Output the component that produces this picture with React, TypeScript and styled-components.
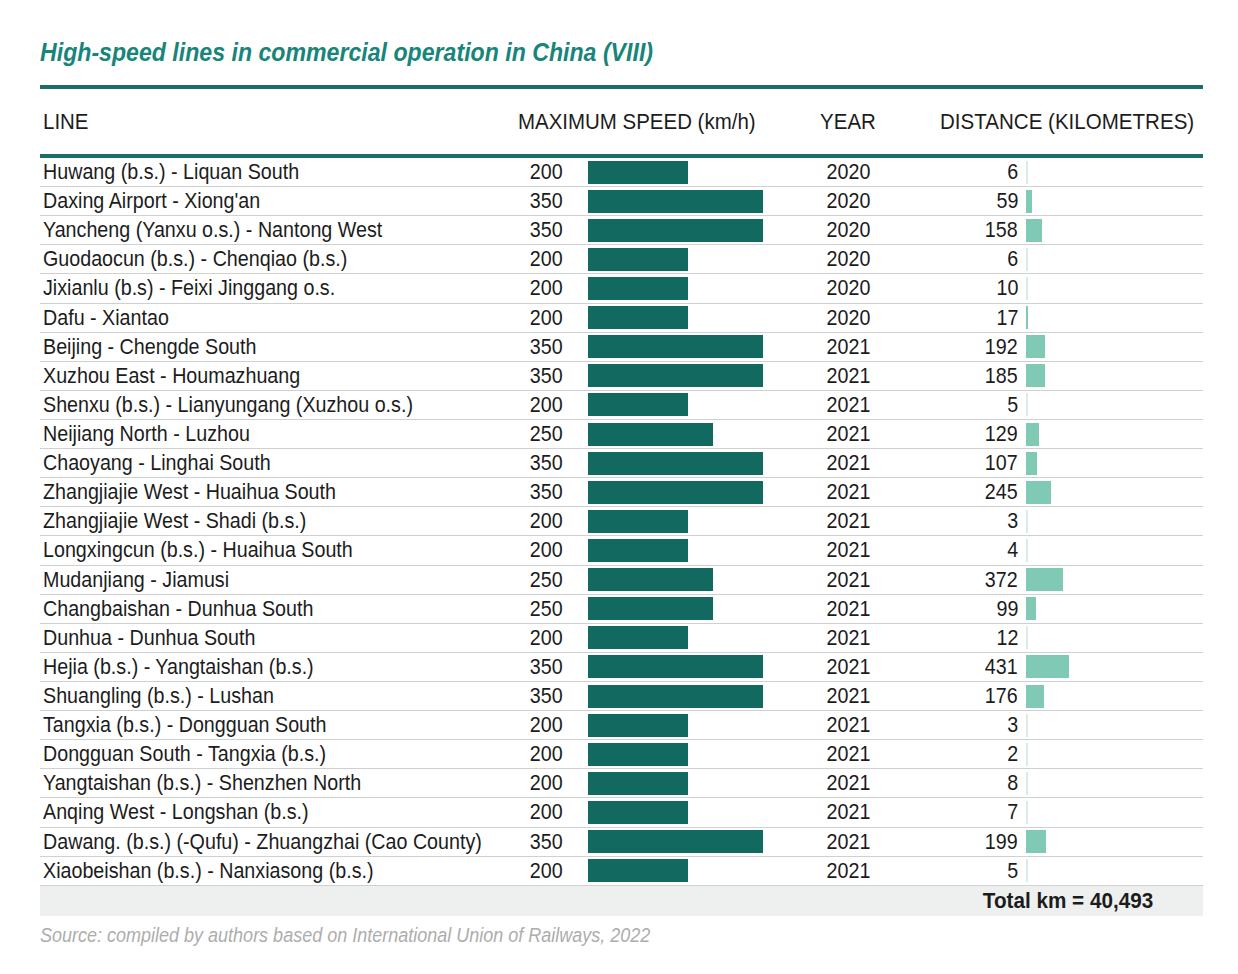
import React from "react";
import styled, { createGlobalStyle } from "styled-components";

const GlobalStyle = createGlobalStyle`
  html, body { margin: 0; padding: 0; background: #ffffff; }
  body { font-family: "Liberation Sans Narrow", "Arial Narrow", "Liberation Sans", Arial, sans-serif; color: #1c1c1c; }
`;

const rows: [string, number, number, number][] = [
  ["Huwang (b.s.) - Liquan South", 200, 2020, 6],
  ["Daxing Airport - Xiong'an", 350, 2020, 59],
  ["Yancheng (Yanxu o.s.) - Nantong West", 350, 2020, 158],
  ["Guodaocun (b.s.) - Chenqiao (b.s.)", 200, 2020, 6],
  ["Jixianlu (b.s) - Feixi Jinggang o.s.", 200, 2020, 10],
  ["Dafu - Xiantao", 200, 2020, 17],
  ["Beijing - Chengde South", 350, 2021, 192],
  ["Xuzhou East - Houmazhuang", 350, 2021, 185],
  ["Shenxu (b.s.) - Lianyungang (Xuzhou o.s.)", 200, 2021, 5],
  ["Neijiang North - Luzhou", 250, 2021, 129],
  ["Chaoyang - Linghai South", 350, 2021, 107],
  ["Zhangjiajie West - Huaihua South", 350, 2021, 245],
  ["Zhangjiajie West - Shadi (b.s.)", 200, 2021, 3],
  ["Longxingcun (b.s.) - Huaihua South", 200, 2021, 4],
  ["Mudanjiang - Jiamusi", 250, 2021, 372],
  ["Changbaishan - Dunhua South", 250, 2021, 99],
  ["Dunhua - Dunhua South", 200, 2021, 12],
  ["Hejia (b.s.) - Yangtaishan (b.s.)", 350, 2021, 431],
  ["Shuangling (b.s.) - Lushan", 350, 2021, 176],
  ["Tangxia (b.s.) - Dongguan South", 200, 2021, 3],
  ["Dongguan South - Tangxia (b.s.)", 200, 2021, 2],
  ["Yangtaishan (b.s.) - Shenzhen North", 200, 2021, 8],
  ["Anqing West - Longshan (b.s.)", 200, 2021, 7],
  ["Dawang. (b.s.) (-Qufu) - Zhuangzhai (Cao County)", 350, 2021, 199],
  ["Xiaobeishan (b.s.) - Nanxiasong (b.s.)", 200, 2021, 5],
];

const Page = styled.div`
  padding: 34px 35px 20px 40px;
  width: 1163px;
`;

/* Condensed text: Liberation Sans squeezed horizontally to mimic Arial Narrow */
const Narrow = styled.span<{ $scale: number; $origin?: string }>`
  display: inline-block;
  white-space: nowrap;
  transform: scaleX(${(p) => p.$scale});
  transform-origin: ${(p) => p.$origin ?? "left"} center;
`;

const Title = styled.h1`
  margin: 0 0 15px 0;
  font-size: 25.5px;
  font-weight: bold;
  font-style: italic;
  color: #17857a;
  line-height: 36px;
`;

const Table = styled.div`
  border-top: 4px solid #1c6f68;
`;

const Grid = styled.div`
  display: grid;
  grid-template-columns: 480px 44px 224px 120px 111px 184px;
  align-items: center;
`;

const HeaderRow = styled(Grid)`
  height: 65px;
  border-bottom: 4px solid #1c6f68;
  font-size: 22px;
`;

const HeadCell = styled.div<{ $align?: string; $span?: number; $pad?: string }>`
  grid-column: span ${(p) => p.$span ?? 1};
  text-align: ${(p) => p.$align ?? "left"};
  padding: ${(p) => p.$pad ?? "0"};
  white-space: nowrap;
`;

const Row = styled(Grid)`
  height: 29.12px;
  box-sizing: border-box;
  border-bottom: 1.5px solid #cfd1d0;
  font-size: 22px;
  line-height: 24px;
`;

const LineCell = styled.div`
  padding-left: 3px;
  white-space: nowrap;
`;

const Num = styled.div`
  text-align: right;
  padding-right: 1px;
`;

const Center = styled.div`
  text-align: center;
`;

const BarCell = styled.div<{ $pad: number }>`
  padding-left: ${(p) => p.$pad}px;
  display: flex;
  align-items: center;
  height: 100%;
`;

const SpeedBar = styled.div`
  height: 23px;
  background: #11695f;
`;

const DistBar = styled.div<{ $thin?: boolean }>`
  height: 23px;
  background: ${(p) => (p.$thin ? "#d9ece6" : "#80c9b4")};
  min-width: 1.5px;
`;

const TotalBand = styled.div`
  height: 30px;
  background: #eef0ef;
  display: flex;
  align-items: center;
  justify-content: flex-end;
  padding-right: 50px;
  font-size: 22px;
  font-weight: bold;
`;

const Source = styled.div`
  margin-top: 8px;
  font-size: 20px;
  font-style: italic;
  color: #adadad;
`;

const BODY = 0.895;

export default function App() {
  return (
    <>
      <GlobalStyle />
      <Page>
        <Title>
          <Narrow $scale={0.907}>High-speed lines in commercial operation in China (VIII)</Narrow>
        </Title>
        <Table>
          <HeaderRow>
            <HeadCell $pad="0 0 0 3px">
              <Narrow $scale={0.93}>LINE</Narrow>
            </HeadCell>
            <HeadCell $span={2} $pad="0 0 0 0" style={{ marginLeft: -2 }}>
              <Narrow $scale={0.93}>MAXIMUM SPEED (km/h)</Narrow>
            </HeadCell>
            <HeadCell $align="center">
              <Narrow $scale={0.93} $origin="center">YEAR</Narrow>
            </HeadCell>
            <HeadCell $span={2} $align="right" $pad="0 9px 0 0">
              <Narrow $scale={0.934} $origin="right">DISTANCE (KILOMETRES)</Narrow>
            </HeadCell>
          </HeaderRow>
          {rows.map(([line, speed, year, dist]) => (
            <Row key={line}>
              <LineCell>
                <Narrow $scale={BODY}>{line}</Narrow>
              </LineCell>
              <Num>
                <Narrow $scale={BODY} $origin="right">{speed}</Narrow>
              </Num>
              <BarCell $pad={24}>
                <SpeedBar style={{ width: speed / 2 }} />
              </BarCell>
              <Center>
                <Narrow $scale={BODY} $origin="center">{year}</Narrow>
              </Center>
              <Num>
                <Narrow $scale={BODY} $origin="right">{dist}</Narrow>
              </Num>
              <BarCell $pad={7}>
                <DistBar $thin={dist < 15} style={{ width: dist / 10 }} />
              </BarCell>
            </Row>
          ))}
          <TotalBand>
            <Narrow $scale={0.94} $origin="right">Total km = 40,493</Narrow>
          </TotalBand>
        </Table>
        <Source>
          <Narrow $scale={0.9}>Source: compiled by authors based on International Union of Railways, 2022</Narrow>
        </Source>
      </Page>
    </>
  );
}
